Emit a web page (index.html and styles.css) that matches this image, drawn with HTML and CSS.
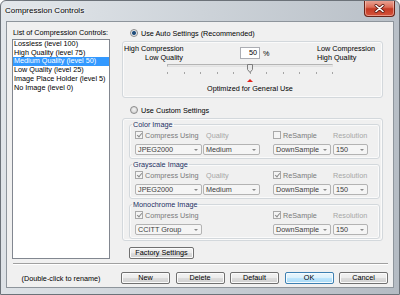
FILE: index.html
```html
<!DOCTYPE html>
<html lang="en">
<head>
  <meta charset="UTF-8">
  <title>Compression Controls</title>
  <link rel="stylesheet" href="styles.css">
</head>
<body>
  <div class="window">
    <div class="titlebar">
      <span class="title">Compression Controls</span>
      <span class="close">
        <svg width="11" height="9" viewBox="0 0 11 9">
          <path d="M2 1.5 L9 7.5 M9 1.5 L2 7.5" stroke="#5a1a12" stroke-width="3" stroke-linecap="round"/>
          <path d="M2 1.5 L9 7.5 M9 1.5 L2 7.5" stroke="#ffffff" stroke-width="1.6" stroke-linecap="round"/>
        </svg>
      </span>
    </div>

    <div class="client">
      <div class="main">
        <div class="left">
          <div class="list-label">List of Compression Controls:</div>
          <ul class="listbox">
            <li>Lossless (level 100)</li>
            <li>High Quality (level 75)</li>
            <li class="selected">Medium Quality (level 50)</li>
            <li>Low Quality (level 25)</li>
            <li>Image Place Holder (level 5)</li>
            <li>No Image (level 0)</li>
          </ul>
        </div>

        <div class="right">
          <div class="radio-row"><span class="radio on"></span>Use Auto Settings (Recommended)</div>
          <div class="panel auto">
            <div class="auto-top">
              <div class="end-label high">High Compression<br>Low Quality</div>
              <div class="value"><span class="num">50</span><span class="pct">%</span></div>
              <div class="end-label">Low Compression<br>High Quality</div>
            </div>
            <div class="slider">
              <div class="track"></div>
              <div class="ticks">
                <i></i><i></i><i></i><i></i><i></i><i></i><i></i><i></i><i></i><i></i><i></i>
              </div>
              <svg class="thumb" width="6" height="9" viewBox="0 0 6 9">
                <path d="M0.5 0.5 H5.5 V5.5 L3 8.5 L0.5 5.5 Z" fill="#e9e9e9" stroke="#7d7d7d" stroke-width="1"/>
              </svg>
            </div>
            <div class="optimized">
              <div class="marker"></div>
              <div class="marker-label">Optimized for General Use</div>
            </div>
          </div>

          <div class="radio-row custom-row"><span class="radio"></span>Use Custom Settings</div>
          <div class="panel custom">
            <fieldset class="group">
              <legend>Color Image</legend>
              <div class="fields">
                <div class="check"><span class="box on"></span>Compress Using</div>
                <div class="field-label">Quality</div>
                <div class="check"><span class="box"></span>ReSample</div>
                <div class="field-label res">Resolution</div>
                <div class="combo w67"><span>JPEG2000</span><i></i></div>
                <div class="combo w57"><span>Medium</span><i></i></div>
                <div class="combo w58"><span>DownSample</span><i></i></div>
                <div class="combo w35"><span>150</span><i></i></div>
              </div>
            </fieldset>
            <fieldset class="group">
              <legend>Grayscale Image</legend>
              <div class="fields">
                <div class="check"><span class="box on"></span>Compress Using</div>
                <div class="field-label">Quality</div>
                <div class="check"><span class="box on"></span>ReSample</div>
                <div class="field-label res">Resolution</div>
                <div class="combo w67"><span>JPEG2000</span><i></i></div>
                <div class="combo w57"><span>Medium</span><i></i></div>
                <div class="combo w58"><span>DownSample</span><i></i></div>
                <div class="combo w35"><span>150</span><i></i></div>
              </div>
            </fieldset>
            <fieldset class="group">
              <legend>Monochrome Image</legend>
              <div class="fields">
                <div class="check"><span class="box on"></span>Compress Using</div>
                <div></div>
                <div class="check"><span class="box on"></span>ReSample</div>
                <div class="field-label res">Resolution</div>
                <div class="combo w67"><span>CCITT Group</span><i></i></div>
                <div></div>
                <div class="combo w58"><span>DownSample</span><i></i></div>
                <div class="combo w35"><span>150</span><i></i></div>
              </div>
            </fieldset>
          </div>

          <button class="btn factory">Factory Settings</button>
        </div>
      </div>

      <div class="separator"></div>

      <div class="footer">
        <div class="hint">(Double-click to rename)</div>
        <div class="buttons">
          <button class="btn">New</button>
          <button class="btn">Delete</button>
          <button class="btn">Default</button>
          <button class="btn default">OK</button>
          <button class="btn">Cancel</button>
        </div>
      </div>
    </div>
  </div>
</body>
</html>
```

FILE: styles.css
```css
body {
  margin: 0;
  font-family: 'Liberation Sans', Arial, sans-serif;
  font-size: 7.25px;
  color: #000;
  background: #fff;
}
.window {
  width: 400px;
  height: 295px;
  box-sizing: border-box;
  border: 1px solid #6c7279;
  border-radius: 6px 6px 0 0;
  background: linear-gradient(100deg, #e3e7eb 0%, #cdd3d9 45%, #b4bbc3 100%);
  overflow: hidden;
}
.titlebar {
  height: 20px;
  display: flex;
  justify-content: space-between;
  align-items: flex-start;
  padding: 0 4px 0 4px;
}
.title {
  line-height: 20px;
  font-size: 8px;
  text-shadow: 0 0 4px #fff, 0 0 2px #fff;
}
.close {
  width: 31px;
  height: 17px;
  margin-top: -1px;
  box-sizing: border-box;
  border: 1px solid #6a2318;
  border-top: none;
  border-radius: 0 0 4px 4px;
  background: linear-gradient(#eaa99b 0%, #dc6d57 45%, #c43a24 55%, #d5533b 100%);
  box-shadow: inset 0 0 0 1px rgba(255, 220, 210, 0.5);
  display: flex;
  align-items: center;
  justify-content: center;
}
.client {
  margin: 0 5px 0 5px;
  height: 267px;
  box-sizing: border-box;
  border: 1px solid #8e959c;
  background: #f0f0f0;
  overflow: hidden;
}
.main {
  display: flex;
  align-items: flex-start;
  padding: 6px 0 0 5px;
}
.left {
  width: 98px;
}
.list-label {
  line-height: 9px;
  padding-left: 1px;
  white-space: nowrap;
}
.listbox {
  list-style: none;
  margin: 2px 0 0 0;
  padding: 0;
  height: 220px;
  box-sizing: border-box;
  border: 1px solid #828790;
  background: #fff;
}
.listbox li {
  line-height: 8.7px;
  padding-left: 1px;
  white-space: nowrap;
}
.listbox li.selected {
  background: #3399ff;
  color: #fff;
}
.right {
  width: 261px;
  margin-left: 12px;
}
.radio-row {
  display: flex;
  align-items: center;
  height: 10px;
  padding-left: 8px;
  white-space: nowrap;
}
.custom-row {
  margin-top: 7px;
}
.radio {
  width: 8px;
  height: 8px;
  box-sizing: border-box;
  border-radius: 50%;
  border: 1px solid #8b8b8b;
  background: radial-gradient(circle at 50% 40%, #f4f4f4, #c9c9c9);
  margin-right: 3px;
}
.radio.on {
  background: radial-gradient(circle, #1d3d62 0, #2b5a8a 1.6px, #eaeaea 2.4px);
}
.panel {
  border: 1px solid #d3d8dc;
  border-radius: 3px;
  box-shadow: inset 0 0 0 1px #fafafa;
  margin-top: 3px;
}
.auto {
  padding: 3px 0 4px 1px;
}
.auto-top {
  display: grid;
  grid-template-columns: 59px 134px auto;
}
.end-label {
  line-height: 8.7px;
  white-space: nowrap;
}
.end-label.high {
  text-align: right;
}
.value {
  display: flex;
  align-items: center;
  padding-left: 57px;
  height: 12px;
  margin-top: 2px;
}
.num {
  width: 20px;
  height: 12px;
  box-sizing: border-box;
  border: 1px solid #abadb3;
  background: #fff;
  text-align: right;
  padding-right: 2px;
  line-height: 10px;
}
.pct {
  margin-left: 3px;
}
.slider {
  position: relative;
  width: 166px;
  height: 13px;
  margin-left: 43px;
}
.track {
  margin-top: 2px;
  height: 3px;
  box-sizing: border-box;
  border: 1px solid #b4b4b4;
  border-right-color: #e2e2e2;
  border-bottom-color: #e2e2e2;
  background: #e8e8e8;
}
.ticks {
  display: flex;
  justify-content: space-between;
  margin-top: 5px;
}
.ticks i {
  width: 1px;
  height: 2px;
  background: #a5a5a5;
}
.thumb {
  position: absolute;
  left: 80px;
  top: 0;
}
.optimized {
  width: 166px;
  margin-left: 43px;
}
.marker {
  width: 0;
  height: 0;
  margin: 2px auto 0 auto;
  border-left: 3px solid transparent;
  border-right: 3px solid transparent;
  border-bottom: 3px solid #e3231b;
}
.marker-label {
  margin-top: 2px;
  line-height: 9px;
  text-align: center;
  white-space: nowrap;
}
.custom {
  padding: 1px 2px 1px 6px;
}
.group {
  margin: 0 0 1px 0;
  padding: 1px 0 3px 2px;
  border: 1px solid #d3d8dc;
  border-radius: 3px;
  box-shadow: inset 0 0 0 1px #fafafa;
}
.group:last-child {
  margin-bottom: 0;
}
.group legend {
  padding: 0 1px;
  line-height: 9px;
  color: #1b2f63;
  white-space: nowrap;
}
.fields {
  display: grid;
  grid-template-columns: 68px 70px 60px 35px;
  grid-template-rows: 10px 11px;
  row-gap: 4px;
  align-items: center;
  margin-left: 3px;
}
.check {
  display: flex;
  align-items: center;
  color: #7a7a7a;
  white-space: nowrap;
}
.box {
  width: 8px;
  height: 8px;
  box-sizing: border-box;
  border: 1px solid #a9a9a9;
  background: #f4f4f4;
  margin-right: 2px;
  position: relative;
}
.box.on::after {
  content: "";
  position: absolute;
  left: 2px;
  top: 0;
  width: 2px;
  height: 4px;
  border-right: 1px solid #8c8c8c;
  border-bottom: 1px solid #8c8c8c;
  transform: rotate(40deg);
}
.field-label {
  color: #a6a6a6;
  padding-left: 3px;
  white-space: nowrap;
}
.field-label.res {
  padding-left: 0;
}
.combo {
  height: 11px;
  box-sizing: border-box;
  border: 1px solid #b3b3b3;
  border-radius: 2px;
  background: #f5f5f5;
  display: flex;
  align-items: center;
  justify-content: space-between;
  padding: 0 3px 0 2px;
  color: #3c3c3c;
  white-space: nowrap;
}
.combo i {
  width: 0;
  height: 0;
  border-left: 2px solid transparent;
  border-right: 2px solid transparent;
  border-top: 2px solid #8a8a8a;
}
.w67 { width: 67px; }
.w57 { width: 57px; }
.w58 { width: 58px; }
.w35 { width: 35px; }
.btn {
  font-family: inherit;
  font-size: 7.25px;
  color: #000;
  height: 12px;
  padding: 0;
  box-sizing: border-box;
  border: 1px solid #707070;
  border-radius: 2px;
  background: linear-gradient(#f3f3f3 0%, #ebebeb 50%, #dddddd 51%, #cfcfcf 100%);
  box-shadow: inset 0 0 0 1px #fbfbfb;
  line-height: 10px;
}
.factory {
  display: block;
  width: 65px;
  margin: 6px 0 0 7px;
}
.separator {
  margin: 4px 5px 0 6px;
  height: 1px;
  border-top: 1px solid #a0a0a0;
  border-bottom: 1px solid #ffffff;
  height: 0;
}
.footer {
  display: flex;
  align-items: center;
  margin-top: 7px;
  padding-left: 5px;
}
.hint {
  width: 98px;
  text-align: center;
  white-space: nowrap;
}
.buttons {
  display: flex;
  gap: 5.5px;
  margin-left: 11px;
}
.buttons .btn {
  width: 49px;
}
.btn.default {
  border-color: #3c7fb1;
  background: linear-gradient(#eaf6fd 0%, #d9f0fc 50%, #bee6fd 51%, #a7d9f5 100%);
  box-shadow: inset 0 0 0 1px #f4fbff;
}
```
